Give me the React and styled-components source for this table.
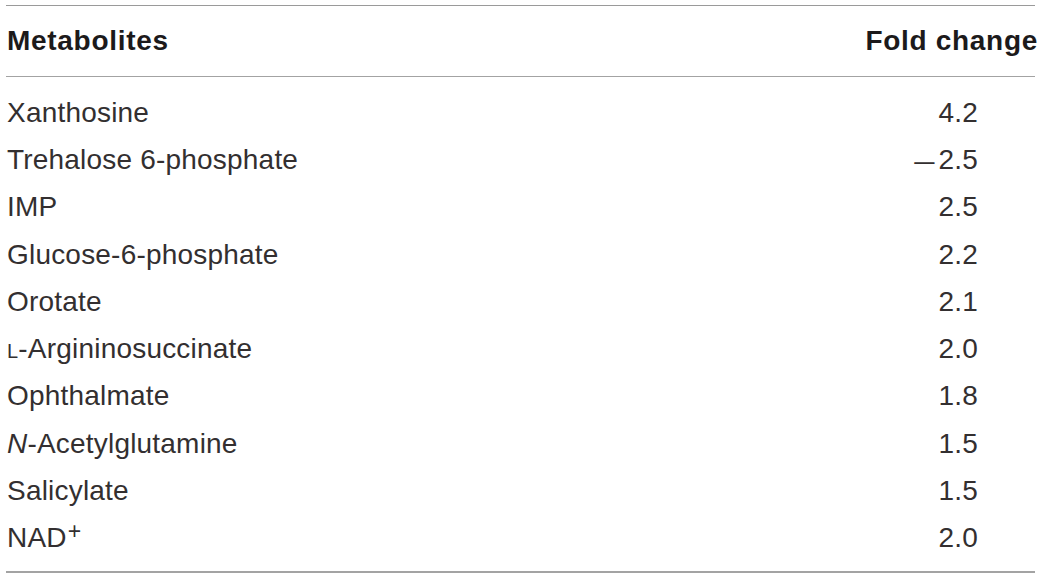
import React from "react";
import styled, { createGlobalStyle } from "styled-components";

const GlobalStyle = createGlobalStyle`
  body {
    margin: 0;
    background: #ffffff;
    font-family: "Liberation Sans", Arial, sans-serif;
    color: #231f20;
  }
`;

const Wrapper = styled.section`
  width: 1029px;
  margin: 5px 0 0 6px;
  border-top: 1px solid #9a9a9a;
  border-bottom: 2px solid #a3a3a3;
`;

const HeadRow = styled.div`
  display: flex;
  justify-content: space-between;
  align-items: center;
  height: 70px;
  border-bottom: 1px solid #a3a3a3;
`;

const HeadCell = styled.div`
  font-size: 28px;
  font-weight: 700;
  letter-spacing: 0.7px;
  padding-left: ${(p) => (p.$right ? "0" : "1px")};
  margin-right: ${(p) => (p.$right ? "-3px" : "0")};
  color: #1c1a1b;
`;

const Body = styled.div`
  display: flex;
  flex-direction: column;
  padding: 12px 0 9px;
`;

const Row = styled.div`
  display: flex;
  justify-content: space-between;
  align-items: center;
  height: 47.3px;
`;

const Cell = styled.div`
  font-size: 28px;
  font-weight: 400;
  letter-spacing: 0.2px;
  color: #332f30;
  padding-left: ${(p) => (p.$right ? "0" : "1px")};
  padding-right: ${(p) => (p.$right ? "57px" : "0")};
`;

const SmallCap = styled.span`
  font-size: 20px;
`;

const Minus = styled.span`
  display: inline-block;
  transform: scaleX(1.3) translateY(1px);
  transform-origin: right center;
  margin-right: 4px;
`;

const Sup = styled.sup`
  font-size: 23px;
  vertical-align: 8px;
  line-height: 0;
  margin-left: 1px;
`;

const rows = [
  { name: "Xanthosine", value: "4.2" },
  {
    name: "Trehalose 6-phosphate",
    value: (
      <>
        <Minus>{"\u2013"}</Minus>2.5
      </>
    ),
  },
  { name: "IMP", value: "2.5" },
  { name: "Glucose-6-phosphate", value: "2.2" },
  { name: "Orotate", value: "2.1" },
  {
    name: (
      <>
        <SmallCap>L</SmallCap>-Argininosuccinate
      </>
    ),
    value: "2.0",
  },
  { name: "Ophthalmate", value: "1.8" },
  {
    name: (
      <>
        <i>N</i>-Acetylglutamine
      </>
    ),
    value: "1.5",
  },
  { name: "Salicylate", value: "1.5" },
  {
    name: (
      <>
        NAD<Sup>+</Sup>
      </>
    ),
    value: "2.0",
  },
];

const App = () => {
  return (
    <>
      <GlobalStyle />
      <Wrapper>
        <HeadRow>
          <HeadCell>Metabolites</HeadCell>
          <HeadCell $right>Fold change</HeadCell>
        </HeadRow>
        <Body>
          {rows.map((r, i) => (
            <Row key={i}>
              <Cell>{r.name}</Cell>
              <Cell $right>{r.value}</Cell>
            </Row>
          ))}
        </Body>
      </Wrapper>
    </>
  );
};

export default App;
